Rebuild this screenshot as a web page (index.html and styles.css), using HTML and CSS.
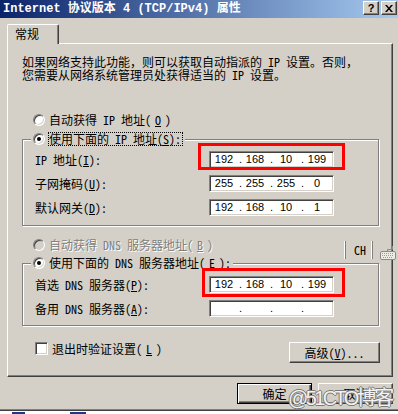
FILE: index.html
```html
<!DOCTYPE html>
<html lang="zh-CN">

<head>
  <meta charset="UTF-8">
  <title>Internet 协议版本 4 (TCP/IPv4) 属性</title>
  <link rel="stylesheet" href="styles.css">
</head>

<body>
  <div class="window">
    <div class="titlebar">
      <span class="title">Internet 协议版本 4 (TCP/IPv4) 属性</span>
      <div class="caption-buttons">
        <span class="caption-btn help">?</span>
        <span class="caption-btn">
          <svg width="8" height="7" viewBox="0 0 8 7">
            <path d="M0 0h2l2 2.4L6 0h2L5 3.5 8 7H6L4 4.6 2 7H0l3-3.5z" fill="#000" />
          </svg>
        </span>
      </div>
    </div>

    <div class="tabs"><span class="tab">常规</span></div>

    <div class="page">
      <p class="intro">如果网络支持此功能<span class="fw">，</span>则可以获取自动指派的 IP 设置<span class="fw">。</span>否则<span class="fw">，</span><br>您需要从网络系统管理员处获得适当的 IP 设置<span class="fw">。</span></p>

      <div class="option first-option"><span class="radio"></span>自动获得 IP 地址(<u>O</u>)</div>

      <fieldset class="group ip-group">
        <legend class="option"><span class="radio checked"></span><span class="focus">使用下面的 IP 地址(<u>S</u>):</span></legend>
        <div class="rows">
          <div class="field-row">
            <span class="field-label">IP 地址(<u>I</u>):</span>
            <div class="ip-wrap">
              <div class="ip-box">
                <span class="oct">192</span><span class="dot">.</span><span class="oct">168</span><span class="dot">.</span><span class="oct">10</span><span class="dot">.</span><span class="oct">199</span>
              </div>
              <span class="mark mark-ip"></span>
            </div>
          </div>
          <div class="field-row">
            <span class="field-label">子网掩码(<u>U</u>):</span>
            <div class="ip-box">
              <span class="oct">255</span><span class="dot">.</span><span class="oct">255</span><span class="dot">.</span><span class="oct">255</span><span class="dot">.</span><span class="oct">0</span>
            </div>
          </div>
          <div class="field-row">
            <span class="field-label">默认网关(<u>D</u>):</span>
            <div class="ip-box">
              <span class="oct">192</span><span class="dot">.</span><span class="oct">168</span><span class="dot">.</span><span class="oct">10</span><span class="dot">.</span><span class="oct">1</span>
            </div>
          </div>
        </div>
      </fieldset>

      <div class="option disabled"><span class="radio"></span>自动获得 DNS 服务器地址(<u>B</u>)</div>

      <fieldset class="group dns-group">
        <legend class="option"><span class="radio checked"></span>使用下面的 DNS 服务器地址(<u>E</u>):</legend>
        <div class="rows">
          <div class="field-row">
            <span class="field-label">首选 DNS 服务器(<u>P</u>):</span>
            <div class="ip-wrap">
              <div class="ip-box">
                <span class="oct">192</span><span class="dot">.</span><span class="oct">168</span><span class="dot">.</span><span class="oct">10</span><span class="dot">.</span><span class="oct">199</span>
              </div>
              <span class="mark mark-dns"></span>
            </div>
          </div>
          <div class="field-row">
            <span class="field-label">备用 DNS 服务器(<u>A</u>):</span>
            <div class="ip-box">
              <span class="oct"></span><span class="dot">.</span><span class="oct"></span><span class="dot">.</span><span class="oct"></span><span class="dot">.</span><span class="oct"></span>
            </div>
          </div>
        </div>
      </fieldset>

      <div class="check-row">
        <label class="check"><span class="checkbox"></span>退出时验证设置(<u>L</u>)</label>
        <button class="btn advanced">高级(<u>V</u>)...</button>
      </div>
    </div>

    <div class="dialog-buttons">
      <button class="btn default">确定</button>
      <button class="btn">取消</button>
    </div>

    <div class="langbar">
      <span class="sep"></span>
      <span class="lang">CH</span>
      <span class="sep"></span>
      <svg class="kbd" width="16" height="14" viewBox="0 0 16 14">
        <path d="M7.5 5V3.5h5V0" fill="none" stroke="#8a8a8a" />
        <rect x="0.5" y="5.5" width="15" height="8" rx="1.5" fill="#ecebe6" stroke="#8a8a8a" />
        <path d="M2 7.5h12M2 9.5h12M3 11.5h10" stroke="#9c9c9c" stroke-dasharray="1 1" />
      </svg>
    </div>

    <div class="watermark">@51CTO博客</div>
  </div>

  <div class="desktop">
    <span class="frag frag-a"></span>
    <span class="frag frag-b"></span>
  </div>
</body>

</html>
```

FILE: styles.css
```css
* {
  box-sizing: border-box;
}

body {
  margin: 0;
  width: 398px;
  height: 414px;
  overflow: hidden;
  background: #fff;
  font-family: "Noto Sans CJK SC", sans-serif;
  font-size: 12px;
  font-feature-settings: "hwid";
  color: #000;
}

u {
  text-underline-offset: 1px;
}

/* full-width punctuation keeps its full width */
.fw {
  display: inline-block;
  height: 13px;
  font-feature-settings: normal;
}

.window {
  position: relative;
  height: 411px;
  background: #d4d0c8;
  border-bottom: 1px solid #404040;
  box-shadow: inset 0 -1px #808080;
}

/* title bar */

.titlebar {
  height: 18px;
  display: flex;
  justify-content: space-between;
  padding: 0 1px 0 3px;
  background: linear-gradient(to right, #0a246a, #a6caf0);
}

.title {
  color: #fff;
  font: bold 12px "Liberation Mono", "Noto Sans CJK SC", monospace;
  line-height: 18px;
  white-space: nowrap;
}

.caption-buttons {
  display: flex;
  gap: 2px;
  padding-top: 1px;
}

.caption-btn {
  width: 16px;
  height: 14px;
  display: flex;
  align-items: center;
  justify-content: center;
  background: #d4d0c8;
  border: 1px solid;
  border-color: #fff #404040 #404040 #fff;
  box-shadow: inset -1px -1px #808080;
}

.help {
  font: bold 11px "Liberation Sans", sans-serif;
  line-height: 12px;
}

/* tab page */

.tabs {
  display: flex;
  padding: 6px 0 0 7px;
}

.tab {
  position: relative;
  z-index: 1;
  width: 52px;
  height: 20px;
  margin-bottom: -1px;
  padding-left: 7px;
  line-height: 18px;
  background: #d4d0c8;
  border: 1px solid #fff;
  border-bottom: none;
  border-right-color: #404040;
  border-radius: 2px 2px 0 0;
  box-shadow: inset -1px 0 #808080;
}

.page {
  margin-left: 7px;
  width: 386px;
  height: 334px;
  padding: 11px 0 0 14px;
  border: 1px solid;
  border-color: #fff #404040 #404040 #fff;
  box-shadow: inset -1px -1px #808080;
}

.intro {
  margin: 0;
  line-height: 13px;
  white-space: nowrap;
}

.option {
  display: flex;
  align-items: center;
  gap: 4px;
  height: 14px;
  line-height: 14px;
  white-space: nowrap;
}

.first-option {
  margin: 32px 0 0 11px;
}

.option.disabled {
  margin: 12px 0 0 11px;
  color: #808080;
  text-shadow: 1px 1px #fff;
}

.radio {
  position: relative;
  flex: none;
  width: 12px;
  height: 12px;
  border-radius: 50%;
  background: #fff;
  border: 1px solid;
  border-color: #808080 #fff #fff #808080;
  box-shadow: inset 1px 1px #404040, inset -1px -1px #d4d0c8;
}

.radio.checked::after {
  content: "";
  position: absolute;
  left: 3px;
  top: 3px;
  width: 4px;
  height: 4px;
  border-radius: 50%;
  background: #000;
}

.disabled .radio {
  background: #d4d0c8;
}

.focus {
  margin-left: -1px;
  padding-right: 1px;
  line-height: 12px;
  border: 1px dotted #000;
}

/* group boxes */

.group {
  min-width: 0;
  width: 357px;
  margin: 5px 0 0;
  padding: 0 0 9px;
  border: 1px solid #808080;
  box-shadow: inset 1px 1px #fff, 1px 1px #fff;
}

.group legend {
  margin-left: 8px;
  padding: 0 2px;
  background: #d4d0c8;
}

.dns-group {
  margin-top: 4px;
  padding-bottom: 8px;
}

.rows {
  display: flex;
  flex-direction: column;
  gap: 7px;
  padding: 5px 0 0 12px;
}

.dns-group .rows {
  padding-top: 6px;
}

.field-row {
  display: flex;
  align-items: center;
  height: 17px;
}

.field-label {
  width: 174px;
  white-space: nowrap;
}

.ip-wrap {
  position: relative;
}

.ip-box {
  display: flex;
  width: 125px;
  height: 17px;
  padding-left: 2px;
  background: #fff;
  border: 1px solid;
  border-color: #808080 #fff #fff #808080;
  box-shadow: inset 1px 1px #404040, inset -1px -1px #d4d0c8;
  font: 11px "Liberation Sans", sans-serif;
  line-height: 15px;
}

.oct {
  width: 24px;
  text-align: center;
}

.dot {
  width: 7px;
  padding-right: 1px;
  text-align: right;
}

.mark {
  position: absolute;
  border: 3px solid #f00;
}

.mark-ip {
  left: -11px;
  top: -8px;
  width: 147px;
  height: 27px;
}

.mark-dns {
  left: -7px;
  top: -8px;
  width: 143px;
  height: 29px;
}

/* bottom of the page */

.check-row {
  display: flex;
  justify-content: space-between;
  align-items: flex-start;
  width: 358px;
  margin-top: 16px;
}

.check {
  display: flex;
  align-items: center;
  gap: 4px;
  height: 13px;
  padding-left: 13px;
}

.checkbox {
  width: 13px;
  height: 13px;
  background: #fff;
  border: 1px solid;
  border-color: #808080 #fff #fff #808080;
  box-shadow: inset 1px 1px #404040, inset -1px -1px #d4d0c8;
}

.btn {
  height: 21px;
  padding: 0;
  font: inherit;
  line-height: 17px;
  color: #000;
  background: #d4d0c8;
  border: 1px solid;
  border-color: #fff #404040 #404040 #fff;
  box-shadow: inset -1px -1px #808080;
}

.advanced {
  width: 91px;
}

.dialog-buttons {
  display: flex;
  justify-content: flex-end;
  gap: 6px;
  margin-top: 6px;
  padding-right: 5px;
}

.dialog-buttons .btn {
  width: 75px;
}

.btn.default {
  border-color: #000;
  box-shadow: inset 1px 1px #fff, inset -1px -1px #404040, inset -2px -2px #808080;
}

/* floating language bar and watermark */

.langbar {
  position: absolute;
  left: 344px;
  top: 241px;
  display: flex;
  align-items: center;
  height: 18px;
}

.sep {
  width: 2px;
  height: 18px;
  border-left: 1px solid #fff;
  border-right: 1px solid #808080;
}

.lang {
  margin: 0 5px 0 8px;
  line-height: 14px;
}

.kbd {
  margin-left: 7px;
  margin-top: 5px;
}

.watermark {
  position: absolute;
  left: 288px;
  top: 382px;
  font: 20px "Liberation Sans", "Noto Sans CJK SC", sans-serif;
  font-feature-settings: normal;
  letter-spacing: -2.6px;
  color: rgba(255, 255, 255, 0.92);
  text-shadow: 1px 0 #7a7a7a, -1px 0 #7a7a7a, 0 1px #7a7a7a, 0 -1px #7a7a7a;
  white-space: nowrap;
}

.desktop {
  display: flex;
  height: 3px;
}

.frag {
  height: 2px;
  margin-top: 1px;
  background: #1c3a8a;
}

.frag-a {
  width: 13px;
  margin-left: 12px;
}

.frag-b {
  width: 16px;
  margin-left: 45px;
}
```
